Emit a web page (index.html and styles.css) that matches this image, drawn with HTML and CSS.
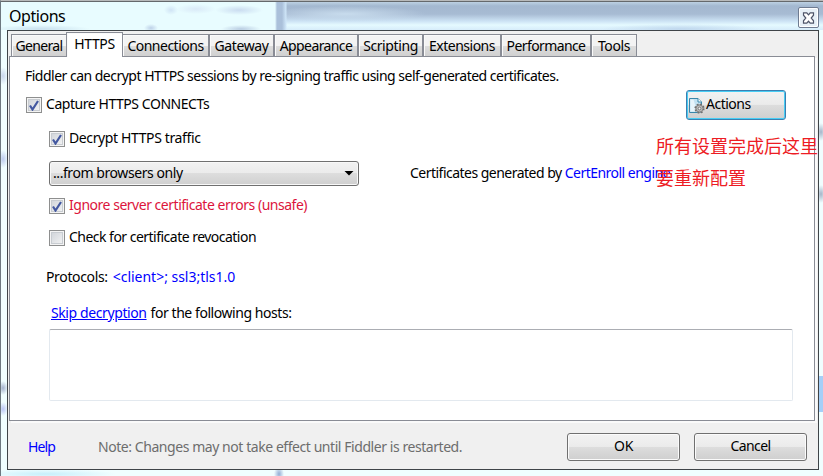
FILE: index.html
```html
<!DOCTYPE html>
<html lang="en">
<head>
<meta charset="utf-8">
<title>Options</title>
<link rel="stylesheet" href="styles.css">
</head>
<body>
<div class="window">
  <header class="titlebar">
    <div class="glass" aria-hidden="true"></div>
    <h1 class="title">Options</h1>
    <button class="close" aria-label="Close"><svg width="13" height="12" viewBox="0 0 13 12"><path d="M1.500 .8h3.300l1.700 2 1.700-2h3.300v2.400L9.200 6l2.300 2.800v2.400H8.200l-1.700-2-1.700 2H1.500V8.800L3.800 6 1.500 3.200z" fill="#fff" stroke="#4d5468" stroke-width="1.200"/></svg></button>
  </header>
  <div class="client">
    <nav class="tabs">
      <span class="tab t1"><span class="label">General</span></span>
      <span class="tab t2 active"><span class="label">HTTPS</span></span>
      <span class="tab t3"><span class="label">Connections</span></span>
      <span class="tab t4"><span class="label">Gateway</span></span>
      <span class="tab t5"><span class="label">Appearance</span></span>
      <span class="tab t6"><span class="label">Scripting</span></span>
      <span class="tab t7"><span class="label">Extensions</span></span>
      <span class="tab t8"><span class="label">Performance</span></span>
      <span class="tab t9"><span class="label">Tools</span></span>
    </nav>
    <main class="panel">
      <p class="intro">Fiddler can decrypt HTTPS sessions by re-signing traffic using self-generated certificates.</p>
      <div class="row capture">
        <span class="box"><svg width="10" height="11" viewBox="0 0 10 11"><path d="M1 5.500l2.500 4L9 1" fill="none" stroke="#4358a0" stroke-width="2.200"/></svg></span>
        <span class="cap-text">Capture HTTPS CONNECTs</span>
        <button class="btn actions"><svg width="17" height="17" viewBox="0 0 17 17"><path d="M1.500 1.500h8.500l3.500 3.500v10.500h-12z" fill="#c3e2f2" stroke="#3986aa"/><path d="M2.500 2.500h3L9 14.500H2.500z" fill="#f7fcff" opacity=".7"/><path d="M10 1.500v3.500h3.500" fill="#fff" stroke="#3986aa"/><circle cx="11.500" cy="11.500" r="4.200" fill="#b9b9b9" stroke="#707070" stroke-width="1.800" stroke-dasharray="1.800 1.500"/><circle cx="11.500" cy="11.500" r="3.500" fill="#bdbdbd" stroke="#777" stroke-width=".8"/><circle cx="11.500" cy="11.500" r="1.400" fill="#eee" stroke="#666" stroke-width=".8"/></svg><span>Actions</span></button>
      </div>
      <div class="row decrypt">
        <span class="box"><svg width="10" height="11" viewBox="0 0 10 11"><path d="M1 5.500l2.500 4L9 1" fill="none" stroke="#4358a0" stroke-width="2.200"/></svg></span>
        <span class="dec-text">Decrypt HTTPS traffic</span>
      </div>
      <div class="row source">
        <div class="select"><span>...from browsers only</span><i class="arrow"></i></div>
        <span class="cert">Certificates generated by <a class="link">CertEnroll engine</a></span>
      </div>
      <div class="row ignore">
        <span class="box"><svg width="10" height="11" viewBox="0 0 10 11"><path d="M1 5.500l2.500 4L9 1" fill="none" stroke="#4358a0" stroke-width="2.200"/></svg></span>
        <span class="ign-text">Ignore server certificate errors (unsafe)</span>
      </div>
      <div class="row revoke">
        <span class="box"></span>
        <span class="rev-text">Check for certificate revocation</span>
      </div>
      <div class="row protocols"><span class="pro-label">Protocols:</span><a class="link pro-value">&lt;client&gt;; ssl3;tls1.0</a></div>
      <div class="row skip"><a class="link under">Skip decryption</a><span class="skip-text">for the following hosts:</span></div>
      <div class="hosts"></div>
    </main>
    <footer class="footer">
      <a class="link help">Help</a>
      <span class="note">Note: Changes may not take effect until Fiddler is restarted.</span>
      <button class="btn ok"><span>OK</span></button>
      <button class="btn cancel"><span>Cancel</span></button>
    </footer>
  </div>
  <p class="annotation" lang="zh-CN">所有设置完成后这里<br>要重新配置</p>
</div>
</body>
</html>
```
FILE: styles.css
```css
* { box-sizing: border-box; }
body {
  margin: 0;
  font: 14px/20px "Noto Sans", "Open Sans", sans-serif;
  letter-spacing: -0.4px;
  color: #000;
  overflow: hidden;
}
p, h1 { margin: 0; }
span, a { white-space: nowrap; }
.window {
  position: relative;
  width: 823px;
  height: 476px;
  padding-left: 6px;
  border-top: 1px solid #b8babb;
  border-left: 1px solid #6d7880;
  background:
    radial-gradient(ellipse 5px 7px at 2px 387px, #a3b1cc, transparent),
    radial-gradient(ellipse 5px 7px at 2px 408px, #bac6f5, transparent),
    radial-gradient(ellipse 5px 9px at 2px 158px, #bccbed, transparent),
    radial-gradient(ellipse 5px 9px at 2px 75px, #c8d5ec, transparent),
    radial-gradient(ellipse 5px 8px at 278px 473px, #93add5, transparent),
    radial-gradient(ellipse 70px 5px at 45px 473px, #c7effb, transparent),
    linear-gradient(#a5cff8, #a5cff8) right 0 top 375px / 4px 36px no-repeat,
    radial-gradient(ellipse 5px 9px at 820px 131px, #a5b4c8, transparent),
    radial-gradient(ellipse 5px 9px at 820px 193px, #a5b4c8, transparent),
    #f0feff;
}
.titlebar {
  position: relative;
  display: flex;
  justify-content: space-between;
  width: 822px;
  height: 29px;
  margin-left: -6px;
  padding: 5px 4px 0 8px;
  border-top: 1px solid #65696c;
  overflow: hidden;
}
.glass {
  position: absolute;
  inset: 0;
  background:
    radial-gradient(ellipse 7px 5px at 170px 8px, #d0e4f5, transparent),
    radial-gradient(ellipse 20px 5px at 195px 7px, #d9e9f7, transparent),
    radial-gradient(ellipse 24px 5px at 238px 8px, #cadcf0, transparent),
    radial-gradient(ellipse 50px 4px at 40px 27px, #c9e1ee, transparent),
    radial-gradient(ellipse 7px 4px at 150px 26px, #bdd1e8, transparent),
    radial-gradient(ellipse 20px 4px at 240px 27px, #b9cde2, transparent),
    linear-gradient(90deg, #e8fcff 0 274px, #aac0da 276px 281px, #cfe6f8 285px, transparent 286px),
    radial-gradient(ellipse 80px 8px at 345px 12px, #c8dced, transparent),
    radial-gradient(ellipse 80px 5px at 680px 27px, #c0d8ee, transparent),
    linear-gradient(#bdd1e3 0, #a3b8d0 4px, #a7bbd3 12px, #cce2f4 19px, #e5faff 23px, #d6ecfa 28px);
}
.title { position: relative; font-size: 16px; line-height: 19px; font-weight: 400; letter-spacing: -0.45px; }
.close {
  position: relative;
  display: grid;
  place-items: center;
  width: 21px;
  height: 21px;
  padding: 0;
  border: 1px solid #6e7b91;
  border-radius: 2px;
  background: #e7f0f7;
  box-shadow: inset 0 0 0 1px #fff;
}
.client {
  display: flex;
  flex-direction: column;
  width: 812px;
  height: 440px;
  border: 1px solid #3f4448;
  background: #f0f0f0;
}
.tabs {
  display: flex;
  align-items: flex-end;
  height: 25px;
  padding-left: 3px;
}
.tab {
  display: flex;
  justify-content: center;
  height: 22px;
  padding-top: 1px;
  border: 1px solid #898c95;
  border-bottom: 0;
  border-right-width: 2px;
  background: linear-gradient(#f3f3f3 0 50%, #dedede 51%, #d0d0d0);
  box-shadow: inset 1px 1px 0 #fafafa;
}
.t1 { width: 55px; border-right: 0; letter-spacing: -0.65px; }
.t2 { width: 57px; }
.t3 { width: 87px; border-left: 0; letter-spacing: -0.5px; }
.t4 { width: 65px; }
.t5 { width: 84px; letter-spacing: -0.6px; }
.t6 { width: 65px; }
.t7 { width: 78px; letter-spacing: -0.5px; }
.t8 { width: 90px; letter-spacing: -0.6px; }
.t9 { width: 45px; border-right-width: 1px; }
.tab + .tab:not(.active) { border-left: 0; }
.tab.active {
  z-index: 1;
  height: 25px;
  margin-bottom: -1px;
  border-right-width: 1px;
  background: #fff;
}
.panel {
  width: 806px;
  height: 365px;
  margin-left: 1px;
  border: 1px solid #898c95;
  background: #fff;
  box-shadow: 2px 2px 0 #fafafa;
}
.intro { height: 20px; margin: 9px 0 0 15px; white-space: nowrap; letter-spacing: -0.51px; }
.row { display: flex; align-items: center; }
.box {
  display: grid;
  place-items: center;
  flex: none;
  width: 16px;
  height: 16px;
  border: 1px solid #8e8f8f;
  background: linear-gradient(135deg, #cdd1d7, #f6f6f6);
  box-shadow: inset 0 0 0 1px #f4f4f4, inset 0 0 0 2px #c8ccd1;
}
.box + span { margin-left: 4px; margin-top: -2px; }
.cap-text { letter-spacing: -0.45px; }
.dec-text { letter-spacing: -0.38px; }
.capture { height: 30px; margin: 4px 0 0 16px; }
.btn {
  display: flex;
  align-items: center;
  justify-content: center;
  padding: 0 0 2px;
  border: 1px solid #707070;
  border-radius: 3px;
  background: linear-gradient(#f2f2f2, #ebebeb 48%, #dddddd 50%, #cfcfcf);
  box-shadow: inset 0 0 0 1px #fbfbfb;
  font: inherit;
  letter-spacing: inherit;
  color: #000;
}
.actions {
  justify-content: flex-start;
  width: 100px;
  height: 30px;
  margin-left: auto;
  margin-right: 28px;
  padding-left: 1px;
  border-color: #3c7fb1;
  box-shadow: inset 0 0 0 1px #48cdf4;
  letter-spacing: -0.5px;
}
.actions svg { margin-top: 2px; }
.actions span { margin-left: 1px; }
.decrypt { height: 20px; margin: 9px 0 0 39px; }
.source { height: 26px; margin: 11px 0 0 39px; }
.select {
  display: flex;
  align-items: center;
  justify-content: space-between;
  width: 310px;
  height: 25px;
  padding: 0 4px 0 3px;
  border: 1px solid #707070;
  border-radius: 3px;
  background: linear-gradient(#f2f2f2, #ebebeb 48%, #dddddd 50%, #cfcfcf);
  box-shadow: inset 0 0 0 1px #f8f8f8;
  letter-spacing: -0.43px;
}
.arrow { width: 10px; height: 5px; background: #000; clip-path: polygon(0 0, 100% 0, 50% 100%); }
.cert { margin-left: 51px; letter-spacing: -0.52px; }
.link { color: #00f; }
.ignore { height: 20px; margin: 10px 0 0 39px; }
.ign-text { color: #dc143c; letter-spacing: -0.48px; }
.revoke { height: 20px; margin: 12px 0 0 39px; }
.rev-text { letter-spacing: -0.52px; }
.protocols { height: 20px; margin: 19px 0 0 36px; }
.pro-label { letter-spacing: -0.35px; }
.pro-value { margin-left: 5px; letter-spacing: -0.02px; }
.skip { height: 20px; margin: 16px 0 0 41px; }
.under { text-decoration: underline; }
.skip-text { margin-left: 4px; letter-spacing: -0.44px; }
.hosts {
  width: 744px;
  height: 72px;
  margin: 6px 0 0 39px;
  border: 1px solid #e3e9ef;
  border-top-color: #abadb3;
  border-radius: 2px;
}
.footer {
  display: flex;
  align-items: center;
  height: 48px;
  padding: 3px 11px 0 20px;
}
.help { width: 70px; letter-spacing: -0.9px; }
.note { color: #6d6d6d; letter-spacing: -0.44px; }
.footer .btn { width: 113px; height: 28px; }
.ok { margin-left: auto; }
.cancel { margin-left: 14px; letter-spacing: -0.6px; }
.annotation {
  position: absolute;
  left: 655px;
  top: 128px;
  font: 18px/32px "Noto Sans CJK SC", sans-serif;
  letter-spacing: 0;
  color: #ed1c24;
  white-space: nowrap;
}
```
